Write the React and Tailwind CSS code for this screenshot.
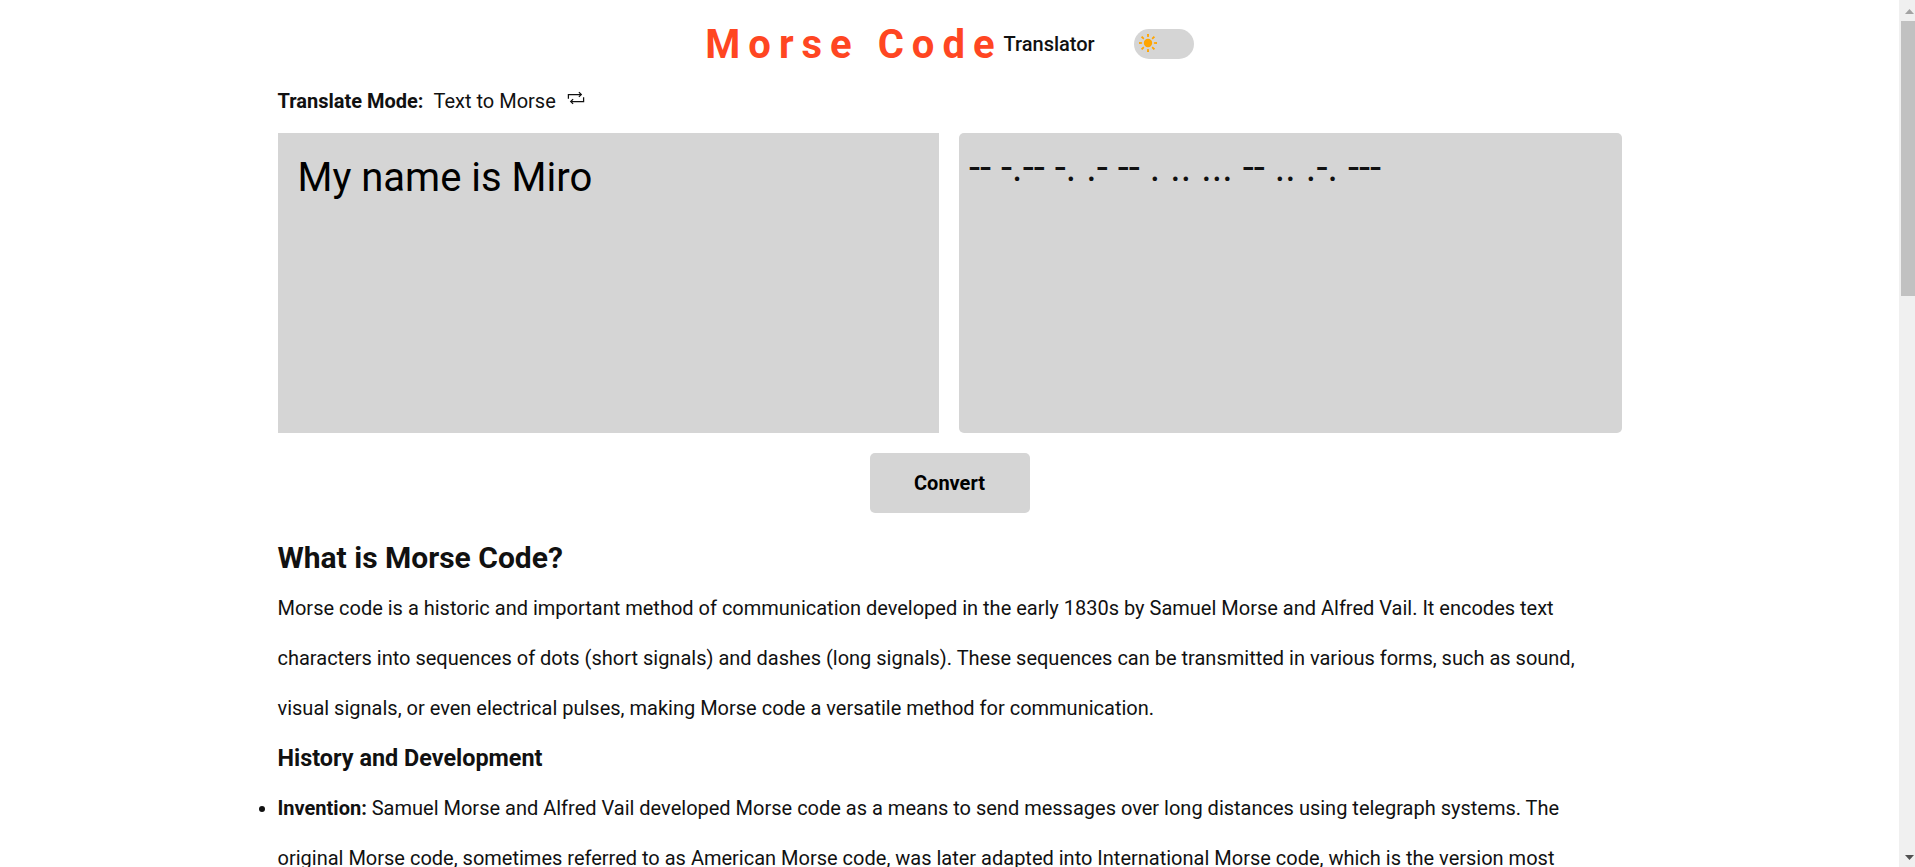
import React from "react";

function SunIcon() {
  const rays = [0, 45, 90, 135, 180, 225, 270, 315];
  return (
    <svg viewBox="-10 -10 20 20" className="block size-5 fill-[#ffa500]">
      <circle r="4.2" />
      {rays.map((angle) => (
        <path key={angle} d="M-1 -9 H1 L0.8 -5.9 H-0.8 Z" transform={`rotate(${angle})`} />
      ))}
    </svg>
  );
}

function SwapIcon() {
  return (
    <svg viewBox="0 0 20 20" className="block size-5 fill-none stroke-[#111] stroke-[1.25]">
      <path d="M2.4 10.8 V6.5 H15.2" />
      <path d="M12.9 4.1 L15.3 6.5 L12.9 8.9" />
      <path d="M17.6 9.2 V13.5 H5.2" />
      <path d="M7.1 11.1 L4.7 13.5 L7.1 15.9" />
    </svg>
  );
}

function Header() {
  return (
    <header className="flex h-[88px] items-center justify-center">
      <h1 className="flex items-center text-xl font-medium">
        <span className="pt-0.5 text-[40px] leading-[50px] font-bold tracking-[8px] text-[#ff4622]">Morse Code</span>
        <span className="pl-px">Translator</span>
      </h1>
      <button className="ml-[39px] flex h-[30px] w-[60px] items-center rounded-full bg-[#d5d5d5] pb-0.5 pl-1">
        <SunIcon />
      </button>
    </header>
  );
}

function Scrollbar() {
  return (
    <div className="flex h-full w-4 shrink-0 flex-col items-end bg-[#f0f0f0]">
      <svg viewBox="0 0 14 21" className="h-[21px] w-3.5 shrink-0 fill-[#a3a3a3]">
        <path d="M4 14 L8.5 9 L13 14 Z" />
      </svg>
      <div className="h-[275px] w-3.5 shrink-0 bg-[#c1c1c1]" />
      <svg viewBox="0 0 14 17" className="mt-auto h-[17px] w-3.5 shrink-0 fill-[#505050]">
        <path d="M4 5 H13 L8.5 10 Z" />
      </svg>
    </div>
  );
}

export default function App() {
  return (
    <div className="flex h-[867px] w-[1915px] overflow-hidden bg-white font-['Roboto',sans-serif] text-xl text-[#111]">
      <div className="min-w-0 flex-1">
        <Header />
        <main className="mx-auto w-[1344px]">
          <div className="flex h-[45px] items-start leading-[26px]">
            <span className="font-bold">Translate Mode:</span>
            <span className="ml-2.5">Text to Morse</span>
            <button className="ml-2.5">
              <SwapIcon />
            </button>
          </div>
          <div className="grid h-[300px] grid-cols-[661.5px_662.5px] gap-5">
            <div className="bg-[#d5d5d5] p-5 text-[40px] leading-[49px] text-black">My name is Miro</div>
            <div className="rounded-[5px] bg-[#d5d5d5] p-2.5 text-[40px] leading-[50px]">
              -- -.-- -. .- -- . .. ... -- .. .-. ---
            </div>
          </div>
          <button className="mx-auto mt-5 flex h-[60px] w-40 items-center justify-center rounded-[5px] bg-[#d5d5d5] font-bold text-black">
            Convert
          </button>
          <article className="mt-5 leading-[50px]">
            <h2 className="text-[30px] leading-[50px] font-bold">What is Morse Code?</h2>
            <p>
              Morse code is a historic and important method of communication developed in the early 1830s by Samuel
              Morse and Alfred Vail. It encodes text characters into sequences of dots (short signals) and dashes (long
              signals). These sequences can be transmitted in various forms, such as sound, visual signals, or even
              electrical pulses, making Morse code a versatile method for communication.
            </p>
            <h3 className="text-[23.4px] leading-[50px] font-bold">History and Development</h3>
            <ul className="list-disc">
              <li>
                <strong className="font-bold">Invention:</strong> Samuel Morse and Alfred Vail developed Morse code
                as a means to send messages over long distances using telegraph systems. The original Morse code,
                sometimes referred to as American Morse code, was later adapted into International Morse code, which is
                the version most
              </li>
            </ul>
          </article>
        </main>
      </div>
      <Scrollbar />
    </div>
  );
}
